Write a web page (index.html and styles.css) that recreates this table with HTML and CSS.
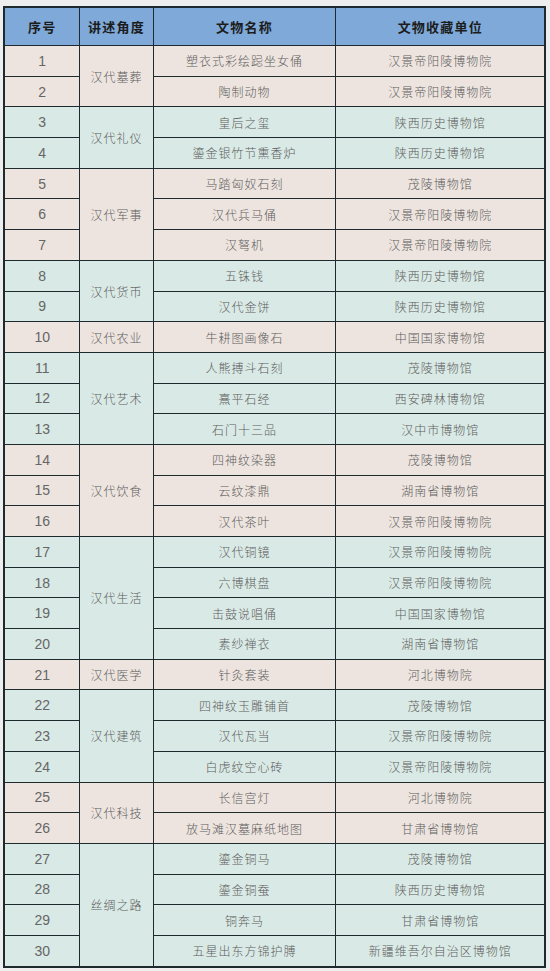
FILE: index.html
```html
<!DOCTYPE html>
<html lang="zh">
<head>
<meta charset="utf-8">
<title>汉代文物</title>
<link rel="stylesheet" href="styles.css">
</head>
<body>
<table class="tbl">
<colgroup><col class="c1"><col class="c2"><col class="c3"><col class="c4"></colgroup>
<thead>
<tr><th>序号</th><th>讲述角度</th><th>文物名称</th><th>文物收藏单位</th></tr>
</thead>
<tbody>
<tr class="a"><td class="n">1</td><td rowspan="2">汉代墓葬</td><td>塑衣式彩绘跽坐女俑</td><td>汉景帝阳陵博物院</td></tr>
<tr class="a"><td class="n">2</td><td>陶制动物</td><td>汉景帝阳陵博物院</td></tr>
<tr class="b"><td class="n">3</td><td rowspan="2">汉代礼仪</td><td>皇后之玺</td><td>陕西历史博物馆</td></tr>
<tr class="b"><td class="n">4</td><td>鎏金银竹节熏香炉</td><td>陕西历史博物馆</td></tr>
<tr class="a"><td class="n">5</td><td rowspan="3">汉代军事</td><td>马踏匈奴石刻</td><td>茂陵博物馆</td></tr>
<tr class="a"><td class="n">6</td><td>汉代兵马俑</td><td>汉景帝阳陵博物院</td></tr>
<tr class="a"><td class="n">7</td><td>汉弩机</td><td>汉景帝阳陵博物院</td></tr>
<tr class="b"><td class="n">8</td><td rowspan="2">汉代货币</td><td>五铢钱</td><td>陕西历史博物馆</td></tr>
<tr class="b"><td class="n">9</td><td>汉代金饼</td><td>陕西历史博物馆</td></tr>
<tr class="a"><td class="n">10</td><td>汉代农业</td><td>牛耕图画像石</td><td>中国国家博物馆</td></tr>
<tr class="b"><td class="n">11</td><td rowspan="3">汉代艺术</td><td>人熊搏斗石刻</td><td>茂陵博物馆</td></tr>
<tr class="b"><td class="n">12</td><td>熹平石经</td><td>西安碑林博物馆</td></tr>
<tr class="b"><td class="n">13</td><td>石门十三品</td><td>汉中市博物馆</td></tr>
<tr class="a"><td class="n">14</td><td rowspan="3">汉代饮食</td><td>四神纹染器</td><td>茂陵博物馆</td></tr>
<tr class="a"><td class="n">15</td><td>云纹漆鼎</td><td>湖南省博物馆</td></tr>
<tr class="a"><td class="n">16</td><td>汉代茶叶</td><td>汉景帝阳陵博物院</td></tr>
<tr class="b"><td class="n">17</td><td rowspan="4">汉代生活</td><td>汉代铜镜</td><td>汉景帝阳陵博物院</td></tr>
<tr class="b"><td class="n">18</td><td>六博棋盘</td><td>汉景帝阳陵博物院</td></tr>
<tr class="b"><td class="n">19</td><td>击鼓说唱俑</td><td>中国国家博物馆</td></tr>
<tr class="b"><td class="n">20</td><td>素纱禅衣</td><td>湖南省博物馆</td></tr>
<tr class="a"><td class="n">21</td><td>汉代医学</td><td>针灸套装</td><td>河北博物院</td></tr>
<tr class="b"><td class="n">22</td><td rowspan="3">汉代建筑</td><td>四神纹玉雕铺首</td><td>茂陵博物馆</td></tr>
<tr class="b"><td class="n">23</td><td>汉代瓦当</td><td>汉景帝阳陵博物院</td></tr>
<tr class="b"><td class="n">24</td><td>白虎纹空心砖</td><td>汉景帝阳陵博物院</td></tr>
<tr class="a"><td class="n">25</td><td rowspan="2">汉代科技</td><td>长信宫灯</td><td>河北博物院</td></tr>
<tr class="a"><td class="n">26</td><td>放马滩汉墓麻纸地图</td><td>甘肃省博物馆</td></tr>
<tr class="b"><td class="n">27</td><td rowspan="4">丝绸之路</td><td>鎏金铜马</td><td>茂陵博物馆</td></tr>
<tr class="b"><td class="n">28</td><td>鎏金铜蚕</td><td>陕西历史博物馆</td></tr>
<tr class="b"><td class="n">29</td><td>铜奔马</td><td>甘肃省博物馆</td></tr>
<tr class="b"><td class="n">30</td><td>五星出东方锦护膊</td><td>新疆维吾尔自治区博物馆</td></tr>
</tbody>
</table>
</body>
</html>
```

FILE: styles.css
```css
html, body {
  margin: 0;
  padding: 0;
  background: #eeeeee;
}
body {
  padding: 6px 0 0 3px;
}
.tbl {
  border-collapse: collapse;
  table-layout: fixed;
  width: 543px;
  border: 2px solid #1f2a2e;
  font-family: "Noto Sans CJK SC", "Noto Sans", sans-serif;
}
.c1 { width: 75px; }
.c2 { width: 74px; }
.c3 { width: 182px; }
.c4 { width: 210px; }
.tbl th, .tbl td {
  border: 1px solid #1f2a2e;
  text-align: center;
  vertical-align: middle;
  padding: 0 0 0 1px;
  overflow: hidden;
  white-space: nowrap;
}
.tbl th {
  height: 37px;
  background: #7ea9d8;
  color: #1c1c1c;
  font-size: 13px;
  font-weight: 700;
  letter-spacing: 1.2px;
}
.tbl td {
  height: 29.7px;
  color: #5d5d5d;
  font-size: 12px;
  font-weight: 300;
  letter-spacing: 1px;
}
.tbl td.n {
  font-family: "Liberation Sans", Arial, sans-serif;
  font-size: 14px;
  letter-spacing: 0;
  color: #666666;
  font-weight: 400;
}
.a td { background: #ede4df; }
.b td { background: #d9e9e5; }
```
